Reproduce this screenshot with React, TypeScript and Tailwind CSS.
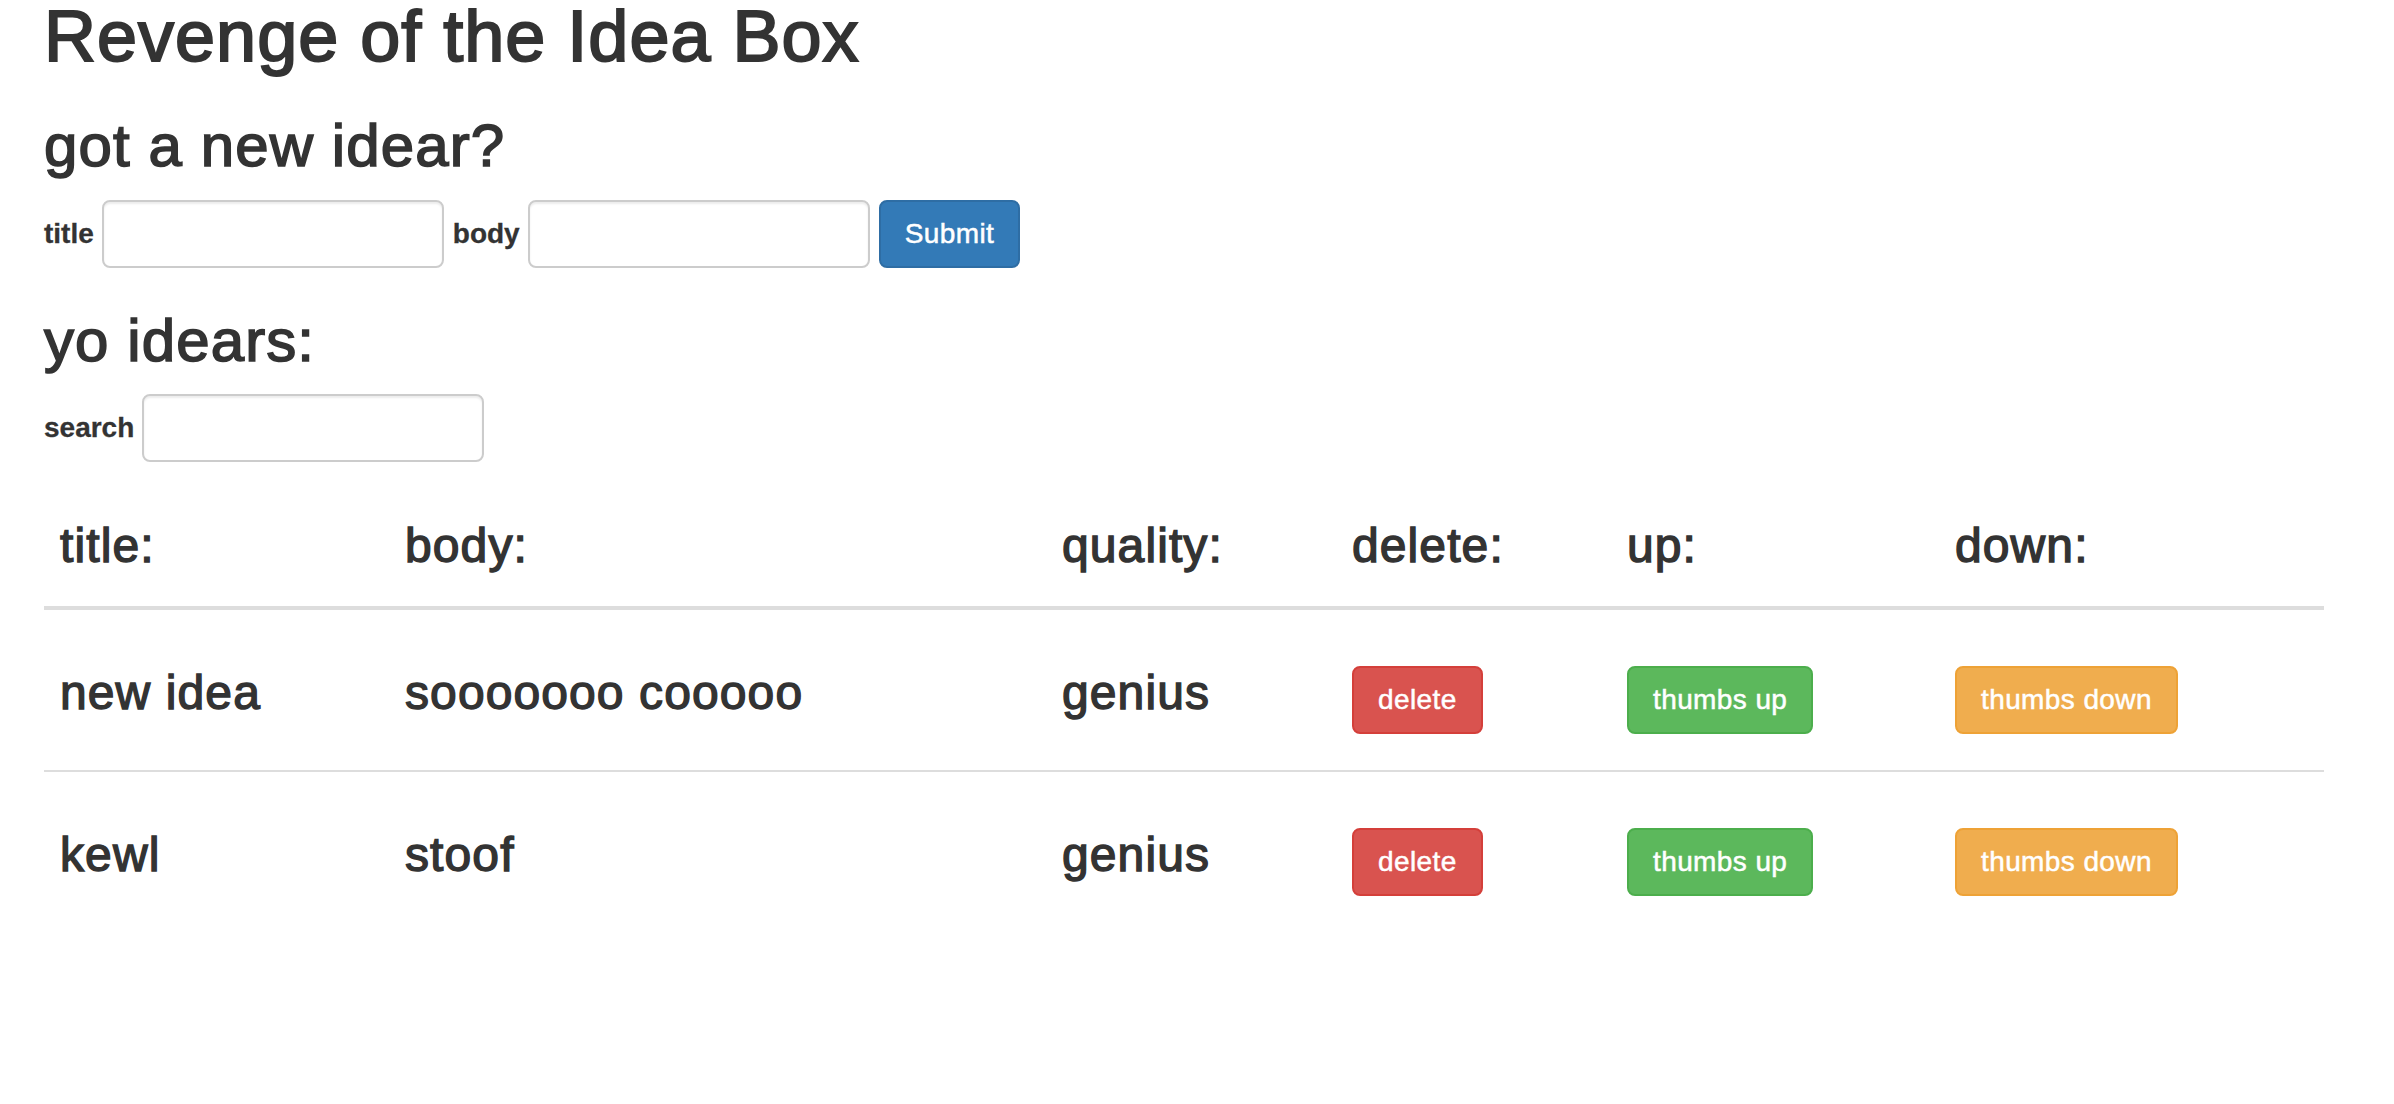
import React from 'react';

const ideas = [
  { title: 'new idea', body: 'sooooooo cooooo', quality: 'genius' },
  { title: 'kewl', body: 'stoof', quality: 'genius' },
];

const cols = 'grid grid-cols-[345px_657px_290px_275px_328px_1fr]';
const btn =
  'h-[68px] px-[24px] rounded-[8px] border-2 text-[28px] leading-[40px] tracking-[0.4px] text-white [-webkit-text-stroke:0.5px_#fff]';
const cell = 'px-[16px] pt-[56px] text-[48px] leading-[53px] tracking-[1.1px] [-webkit-text-stroke:1.4px_#333]';

function Label({ children }: { children: React.ReactNode }) {
  return <label className="text-[28px] leading-[40px] font-bold [-webkit-text-stroke:0.3px_#333]">{children}</label>;
}

function Field() {
  return (
    <input
      type="text"
      className="w-[342px] h-[68px] rounded-[8px] border-2 border-[#ccc] bg-white px-[24px] text-[28px] shadow-[inset_0_2px_2px_rgba(0,0,0,0.075)] outline-none"
    />
  );
}

export default function App() {
  return (
    <div className="min-h-screen bg-white text-[#333] font-['Liberation_Sans',Arial,sans-serif] px-[44px] w-[2368px]">
      <h1 className="text-[72px] leading-[72px] tracking-[1px] [-webkit-text-stroke:2px_#333]">Revenge of the Idea Box</h1>

      <h2 className="mt-[41px] text-[60px] leading-[66px] tracking-[1.1px] [-webkit-text-stroke:1.6px_#333]">got a new idear?</h2>
      <form className="mt-[21px] flex items-center" onSubmit={(e) => e.preventDefault()}>
        <Label>title</Label>
        <div className="ml-[8px] mr-[9px]">
          <Field />
        </div>
        <Label>body</Label>
        <div className="ml-[8px] mr-[9px]">
          <Field />
        </div>
        <button type="submit" className={`${btn} bg-[#337ab7] border-[#2e6da4]`}>
          Submit
        </button>
      </form>

      <h2 className="mt-[40px] text-[60px] leading-[66px] tracking-[1.1px] [-webkit-text-stroke:1.6px_#333]">yo idears:</h2>
      <div className="mt-[20px] flex items-center">
        <Label>search</Label>
        <div className="ml-[8px]">
          <Field />
        </div>
      </div>

      <div className="w-[2280px]">
        <div className={`${cols} h-[148px] border-b-4 border-[#ddd]`}>
          {['title:', 'body:', 'quality:', 'delete:', 'up:', 'down:'].map((h) => (
            <div key={h} className={`${cell} pt-[57px]`}>
              {h}
            </div>
          ))}
        </div>
        {ideas.map((idea, i) => (
          <div
            key={i}
            className={`${cols} items-start ${i < ideas.length - 1 ? 'h-[162px] border-b-2 border-[#ddd]' : 'h-[160px]'}`}
          >
            <div className={cell}>{idea.title}</div>
            <div className={cell}>{idea.body}</div>
            <div className={cell}>{idea.quality}</div>
            <div className="px-[16px] pt-[56px]">
              <button className={`${btn} bg-[#d9534f] border-[#d43f3a]`}>delete</button>
            </div>
            <div className="px-[16px] pt-[56px]">
              <button className={`${btn} bg-[#5cb85c] border-[#4cae4c]`}>thumbs up</button>
            </div>
            <div className="px-[16px] pt-[56px]">
              <button className={`${btn} bg-[#f0ad4e] border-[#eea236]`}>thumbs down</button>
            </div>
          </div>
        ))}
      </div>
    </div>
  );
}
